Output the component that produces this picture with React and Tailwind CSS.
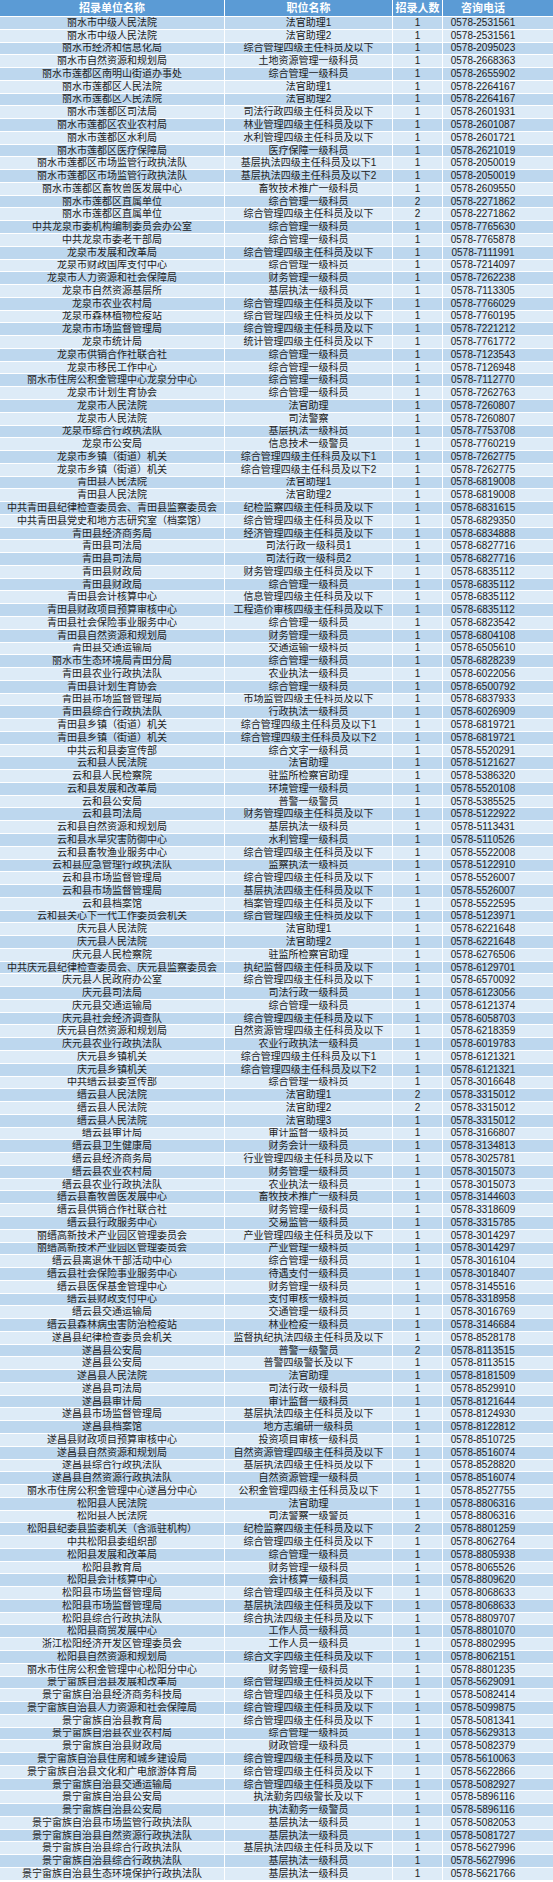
import React from "react";

const RAW = `丽水市中级人民法院|法官助理1|1|0578-2531561
丽水市中级人民法院|法官助理2|1|0578-2531561
丽水市经济和信息化局|综合管理四级主任科员及以下|1|0578-2095023
丽水市自然资源和规划局|土地资源管理一级科员|1|0578-2668363
丽水市莲都区南明山街道办事处|综合管理一级科员|1|0578-2655902
丽水市莲都区人民法院|法官助理1|1|0578-2264167
丽水市莲都区人民法院|法官助理2|1|0578-2264167
丽水市莲都区司法局|司法行政四级主任科员及以下|1|0578-2601931
丽水市莲都区农业农村局|林业管理四级主任科员及以下|1|0578-2601087
丽水市莲都区水利局|水利管理四级主任科员及以下|1|0578-2601721
丽水市莲都区医疗保障局|医疗保障一级科员|1|0578-2621019
丽水市莲都区市场监管行政执法队|基层执法四级主任科员及以下1|1|0578-2050019
丽水市莲都区市场监管行政执法队|基层执法四级主任科员及以下2|1|0578-2050019
丽水市莲都区畜牧兽医发展中心|畜牧技术推广一级科员|1|0578-2609550
丽水市莲都区直属单位|综合管理一级科员|2|0578-2271862
丽水市莲都区直属单位|综合管理四级主任科员及以下|2|0578-2271862
中共龙泉市委机构编制委员会办公室|综合管理一级科员|1|0578-7765630
中共龙泉市委老干部局|综合管理一级科员|1|0578-7765878
龙泉市发展和改革局|综合管理四级主任科员及以下|1|0578-7111991
龙泉市财政国库支付中心|综合管理一级科员|1|0578-7214097
龙泉市人力资源和社会保障局|财务管理一级科员|1|0578-7262238
龙泉市自然资源基层所|基层执法一级科员|1|0578-7113305
龙泉市农业农村局|综合管理四级主任科员及以下|1|0578-7766029
龙泉市森林植物检疫站|综合管理四级主任科员及以下|1|0578-7760195
龙泉市市场监督管理局|综合管理四级主任科员及以下|1|0578-7221212
龙泉市统计局|统计管理四级主任科员及以下|1|0578-7761772
龙泉市供销合作社联合社|综合管理一级科员|1|0578-7123543
龙泉市移民工作中心|综合管理一级科员|1|0578-7126948
丽水市住房公积金管理中心龙泉分中心|综合管理一级科员|1|0578-7112770
龙泉市计划生育协会|综合管理一级科员|1|0578-7262763
龙泉市人民法院|法官助理|1|0578-7260807
龙泉市人民法院|司法警察|1|0578-7260807
龙泉市综合行政执法队|基层执法一级科员|1|0578-7753708
龙泉市公安局|信息技术一级警员|1|0578-7760219
龙泉市乡镇（街道）机关|综合管理四级主任科员及以下1|1|0578-7262775
龙泉市乡镇（街道）机关|综合管理四级主任科员及以下2|1|0578-7262775
青田县人民法院|法官助理1|1|0578-6819008
青田县人民法院|法官助理2|1|0578-6819008
中共青田县纪律检查委员会、青田县监察委员会|纪检监察四级主任科员及以下|1|0578-6831615
中共青田县党史和地方志研究室（档案馆）|综合管理四级主任科员及以下|1|0578-6829350
青田县经济商务局|经济管理四级主任科员及以下|1|0578-6834888
青田县司法局|司法行政一级科员1|1|0578-6827716
青田县司法局|司法行政一级科员2|1|0578-6827716
青田县财政局|财务管理四级主任科员及以下|1|0578-6835112
青田县财政局|综合管理一级科员|1|0578-6835112
青田县会计核算中心|信息管理四级主任科员及以下|1|0578-6835112
青田县财政项目预算审核中心|工程造价审核四级主任科员及以下|1|0578-6835112
青田县社会保险事业服务中心|综合管理一级科员|1|0578-6823542
青田县自然资源和规划局|财务管理一级科员|1|0578-6804108
青田县交通运输局|交通运输一级科员|1|0578-6505610
丽水市生态环境局青田分局|综合管理一级科员|1|0578-6828239
青田县农业行政执法队|农业执法一级科员|1|0578-6022056
青田县计划生育协会|综合管理一级科员|1|0578-6500792
青田县市场监督管理局|市场监管四级主任科员及以下|1|0578-6837933
青田县综合行政执法队|行政执法一级科员|1|0578-6026909
青田县乡镇（街道）机关|综合管理四级主任科员及以下1|1|0578-6819721
青田县乡镇（街道）机关|综合管理四级主任科员及以下2|1|0578-6819721
中共云和县委宣传部|综合文字一级科员|1|0578-5520291
云和县人民法院|法官助理|1|0578-5121627
云和县人民检察院|驻监所检察官助理|1|0578-5386320
云和县发展和改革局|环境管理一级科员|1|0578-5520108
云和县公安局|普警一级警员|1|0578-5385525
云和县司法局|财务管理四级主任科员及以下|1|0578-5122922
云和县自然资源和规划局|基层执法一级科员|1|0578-5113431
云和县水旱灾害防御中心|水利管理一级科员|1|0578-5110526
云和县畜牧渔业服务中心|综合管理四级主任科员及以下|1|0578-5522008
云和县应急管理行政执法队|监察执法一级科员|1|0578-5122910
云和县市场监督管理局|综合管理四级主任科员及以下|1|0578-5526007
云和县市场监督管理局|基层执法四级主任科员及以下|1|0578-5526007
云和县档案馆|档案管理四级主任科员及以下|1|0578-5522595
云和县关心下一代工作委员会机关|综合管理四级主任科员及以下|1|0578-5123971
庆元县人民法院|法官助理1|1|0578-6221648
庆元县人民法院|法官助理2|1|0578-6221648
庆元县人民检察院|驻监所检察官助理|1|0578-6276506
中共庆元县纪律检查委员会、庆元县监察委员会|执纪监督四级主任科员及以下|1|0578-6129701
庆元县人民政府办公室|综合管理四级主任科员及以下|1|0578-6570092
庆元县司法局|司法行政一级科员|1|0578-6123056
庆元县交通运输局|综合管理一级科员|1|0578-6121374
庆元县社会经济调查队|综合管理四级主任科员及以下|1|0578-6058703
庆元县自然资源和规划局|自然资源管理四级主任科员及以下|1|0578-6218359
庆元县农业行政执法队|农业行政执法一级科员|1|0578-6019783
庆元县乡镇机关|综合管理四级主任科员及以下1|1|0578-6121321
庆元县乡镇机关|综合管理四级主任科员及以下2|1|0578-6121321
中共缙云县委宣传部|综合管理一级科员|1|0578-3016648
缙云县人民法院|法官助理1|2|0578-3315012
缙云县人民法院|法官助理2|2|0578-3315012
缙云县人民法院|法官助理3|1|0578-3315012
缙云县审计局|审计监督一级科员|1|0578-3166807
缙云县卫生健康局|财务会计一级科员|1|0578-3134813
缙云县经济商务局|行业管理四级主任科员及以下|1|0578-3025781
缙云县农业农村局|财务管理一级科员|1|0578-3015073
缙云县农业行政执法队|农业执法一级科员|1|0578-3015073
缙云县畜牧兽医发展中心|畜牧技术推广一级科员|1|0578-3144603
缙云县供销合作社联合社|财务管理一级科员|1|0578-3318609
缙云县行政服务中心|交易监管一级科员|1|0578-3315785
丽缙高新技术产业园区管理委员会|产业管理四级主任科员及以下|1|0578-3014297
丽缙高新技术产业园区管理委员会|产业管理一级科员|1|0578-3014297
缙云县离退休干部活动中心|综合管理一级科员|1|0578-3016104
缙云县社会保险事业服务中心|待遇支付一级科员|1|0578-3018407
缙云县医保基金管理中心|财务管理一级科员|1|0578-3145516
缙云县财政支付中心|支付审核一级科员|1|0578-3318958
缙云县交通运输局|交通管理一级科员|1|0578-3016769
缙云县森林病虫害防治检疫站|林业检疫一级科员|1|0578-3146684
遂昌县纪律检查委员会机关|监督执纪执法四级主任科员及以下|1|0578-8528178
遂昌县公安局|普警一级警员|2|0578-8113515
遂昌县公安局|普警四级警长及以下|1|0578-8113515
遂昌县人民法院|法官助理|1|0578-8181509
遂昌县司法局|司法行政一级科员|1|0578-8529910
遂昌县审计局|审计监督一级科员|1|0578-8121644
遂昌县市场监督管理局|基层执法四级主任科员及以下|1|0578-8124930
遂昌县档案馆|地方志编研一级科员|1|0578-8122812
遂昌县财政项目预算审核中心|投资项目审核一级科员|1|0578-8510725
遂昌县自然资源和规划局|自然资源管理四级主任科员及以下|1|0578-8516074
遂昌县综合行政执法队|基层执法四级主任科员及以下|1|0578-8528820
遂昌县自然资源行政执法队|自然资源管理一级科员|1|0578-8516074
丽水市住房公积金管理中心遂昌分中心|公积金管理四级主任科员及以下|1|0578-8527755
松阳县人民法院|法官助理|1|0578-8806316
松阳县人民法院|司法警察一级警员|1|0578-8806316
松阳县纪委县监委机关（含派驻机构）|纪检监察四级主任科员及以下|2|0578-8801259
中共松阳县委组织部|综合管理四级主任科员及以下|1|0578-8062764
松阳县发展和改革局|综合管理一级科员|1|0578-8805938
松阳县教育局|财务管理一级科员|1|0578-8065526
松阳县会计核算中心|会计核算一级科员|1|0578-8809620
松阳县市场监督管理局|综合管理四级主任科员及以下|1|0578-8068633
松阳县市场监督管理局|基层执法四级主任科员及以下|1|0578-8068633
松阳县综合行政执法队|综合执法四级主任科员及以下|1|0578-8809707
松阳县商贸发展中心|工作人员一级科员|1|0578-8801070
浙江松阳经济开发区管理委员会|工作人员一级科员|1|0578-8802995
松阳县自然资源和规划局|综合文字四级主任科员及以下|1|0578-8062151
丽水市住房公积金管理中心松阳分中心|财务管理一级科员|1|0578-8801235
景宁畲族自治县发展和改革局|综合管理四级主任科员及以下|1|0578-5629091
景宁畲族自治县经济商务科技局|综合管理四级主任科员及以下|1|0578-5082414
景宁畲族自治县人力资源和社会保障局|综合管理四级主任科员及以下|1|0578-5099875
景宁畲族自治县教育局|综合管理四级主任科员及以下|1|0578-5081341
景宁畲族自治县农业农村局|综合管理一级科员|1|0578-5629313
景宁畲族自治县财政局|财政管理一级科员|1|0578-5082379
景宁畲族自治县住房和城乡建设局|综合管理四级主任科员及以下|1|0578-5610063
景宁畲族自治县文化和广电旅游体育局|综合管理四级主任科员及以下|1|0578-5622866
景宁畲族自治县交通运输局|综合管理四级主任科员及以下|1|0578-5082927
景宁畲族自治县公安局|执法勤务四级警长及以下|1|0578-5896116
景宁畲族自治县公安局|执法勤务一级警员|1|0578-5896116
景宁畲族自治县市场监管行政执法队|基层执法一级科员|1|0578-5082053
景宁畲族自治县自然资源行政执法队|基层执法一级科员|1|0578-5081727
景宁畲族自治县综合行政执法队|基层执法四级主任科员及以下|1|0578-5627996
景宁畲族自治县综合行政执法队|基层执法一级科员|1|0578-5627996
景宁畲族自治县生态环境保护行政执法队|基层执法一级科员|1|0578-5621766`;

const ROWS = RAW.split("\n").map((l) => l.split("|"));

const FONT = { fontFamily: "'Liberation Sans','Noto Sans CJK SC',sans-serif" };

function Row({ cells, dark }) {
  const bg = dark ? "bg-[#bdd7ee]" : "bg-[#ddebf7]";
  const cell = `${bg} flex items-center justify-center whitespace-nowrap overflow-hidden leading-none`;
  return (
    <div className="grid grid-cols-[224px_167px_49px_1fr] gap-x-px h-[11.774px] text-[10px] text-[#222]">
      <div className={cell}>{cells[0]}</div>
      <div className={cell}>{cells[1]}</div>
      <div className={cell}>{cells[2]}</div>
      <div className={`${cell} pr-[30px]`}>{cells[3]}</div>
    </div>
  );
}

export default function App() {
  const head = "bg-[#5b9bd5] flex items-center justify-center whitespace-nowrap leading-none text-white font-bold text-[11px]";
  return (
    <div className="w-[553px] h-[1882px] bg-white flex flex-col gap-y-px overflow-hidden" style={FONT}>
      <div className="grid grid-cols-[224px_167px_49px_1fr] gap-x-px h-4">
        <div className={head}>招录单位名称</div>
        <div className={head}>职位名称</div>
        <div className={head}>招录人数</div>
        <div className={`${head} pr-[30px]`}>咨询电话</div>
      </div>
      {ROWS.map((r, i) => (
        <Row key={i} cells={r} dark={i % 2 === 0} />
      ))}
    </div>
  );
}
